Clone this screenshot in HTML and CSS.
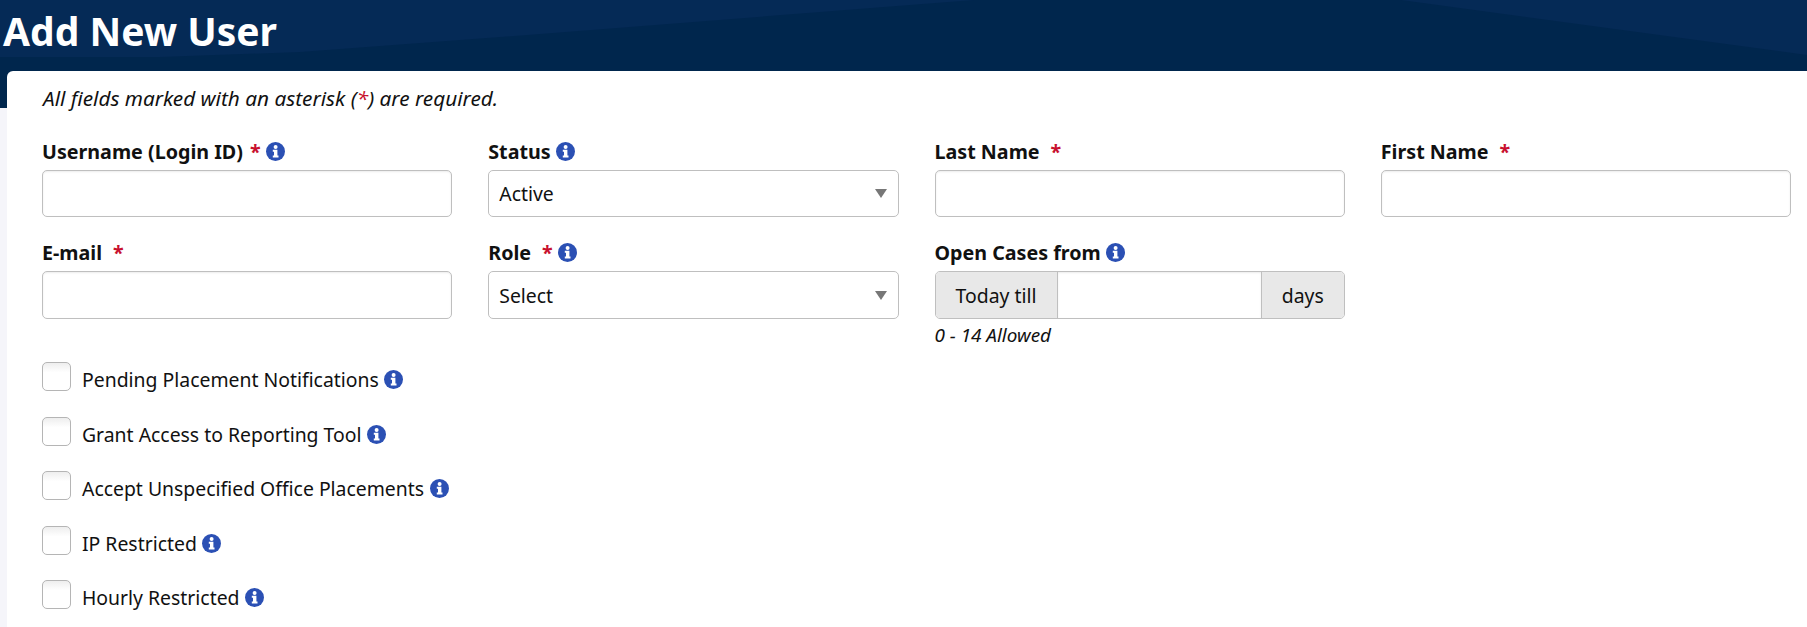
FILE: index.html
```html
<!DOCTYPE html>
<html lang="en">
<head>
<meta charset="utf-8">
<title>Add New User</title>
<link rel="stylesheet" href="styles.css">
</head>
<body>
<svg class="defs" width="0" height="0" aria-hidden="true">
  <symbol id="info" viewBox="0 0 19 19">
    <circle cx="9.5" cy="9.5" r="9.5" fill="#2b50b4"/>
    <circle cx="9.6" cy="5" r="2" fill="#fff"/>
    <path d="M6.8 7.8h4.6v5.7h1.1v2H6.8v-2H8V9.8H6.8z" fill="#fff"/>
  </symbol>
</svg>
<header class="banner">
  <svg class="banner-art" viewBox="0 0 1807 108" preserveAspectRatio="none" aria-hidden="true">
    <path d="M0 0H974L500 37L300 52L160 57H0z" fill="#052a56"/>
    <path d="M1401 0H1807V55z" fill="#052a56"/>
  </svg>
  <h1 class="title">Add New User</h1>
</header>
<main class="card">
  <p class="note">All fields marked with an asterisk (<span class="req-plain">*</span>) are required.</p>
  <div class="grid">
    <div class="field">
      <label class="label">Username (Login ID)<span class="req">*</span><svg class="info"><use href="#info"/></svg></label>
      <input class="control" type="text">
    </div>
    <div class="field">
      <label class="label">Status<svg class="info"><use href="#info"/></svg></label>
      <div class="control select">Active<span class="caret"></span></div>
    </div>
    <div class="field">
      <label class="label">Last Name<span class="req spaced">*</span></label>
      <input class="control" type="text">
    </div>
    <div class="field">
      <label class="label">First Name<span class="req spaced">*</span></label>
      <input class="control" type="text">
    </div>
    <div class="field">
      <label class="label">E-mail<span class="req spaced">*</span></label>
      <input class="control tall" type="text">
    </div>
    <div class="field">
      <label class="label">Role<span class="req spaced">*</span><svg class="info"><use href="#info"/></svg></label>
      <div class="control select tall">Select<span class="caret"></span></div>
    </div>
    <div class="field">
      <label class="label">Open Cases from<svg class="info"><use href="#info"/></svg></label>
      <div class="group">
        <span class="addon addon-left">Today till</span>
        <input class="group-input" type="text">
        <span class="addon addon-right">days</span>
      </div>
      <small class="hint">0 - 14 Allowed</small>
    </div>
  </div>
  <ul class="checks">
    <li class="check"><span class="box"></span>Pending Placement Notifications<svg class="info"><use href="#info"/></svg></li>
    <li class="check"><span class="box"></span>Grant Access to Reporting Tool<svg class="info"><use href="#info"/></svg></li>
    <li class="check"><span class="box"></span>Accept Unspecified Office Placements<svg class="info"><use href="#info"/></svg></li>
    <li class="check"><span class="box"></span>IP Restricted<svg class="info"><use href="#info"/></svg></li>
    <li class="check"><span class="box"></span>Hourly Restricted<svg class="info"><use href="#info"/></svg></li>
  </ul>
</main>
</body>
</html>
```
FILE: styles.css
```css
* { box-sizing: border-box; }
html, body { margin: 0; height: 627px; overflow: hidden; }
body {
  background: #f5f5fa;
  color: #111;
  font-family: "Noto Sans", "Open Sans", sans-serif;
  font-size: 19.4px;
  position: relative;
}
.defs { position: absolute; }
.banner {
  position: relative;
  height: 108px;
  background: #00264d;
  margin-bottom: -37px;
}
.banner-art { position: absolute; inset: 0; width: 100%; height: 100%; }
.title {
  position: relative;
  margin: 0;
  padding: 6px 0 0 3px;
  font-size: 39px;
  line-height: 49px;
  font-weight: 700;
  color: #fff;
}
.card {
  position: relative;
  margin-left: 7px;
  height: 556px;
  padding: 0 16px 0 35px;
  background: #fff;
  border-radius: 6px 0 0 0;
}
.note { margin: 0; padding: 15px 0 0 1px; line-height: 25px; font-size: 20.75px; font-style: italic; }
.req-plain { color: #c8102e; }
.grid {
  display: grid;
  grid-template-columns: repeat(4, minmax(0, 1fr));
  column-gap: 36px;
  margin-top: 29px;
}
.field { height: 101px; }
.label {
  display: flex;
  align-items: center;
  height: 23px;
  margin-bottom: 7px;
  font-size: 19.7px;
  font-weight: 700;
  white-space: pre;
}
.req { color: #c8102e; margin-left: 7px; }
.spaced { margin-left: 11px; }
.info { width: 19px; height: 19px; margin-left: 5.5px; flex: none; }
.control {
  display: block;
  width: 100%;
  height: 47px;
  border: 1px solid #bfbfbf;
  border-radius: 5px;
  background: #fff;
  font: inherit;
  color: inherit;
  box-shadow: inset 0 1px 2px rgba(0, 0, 0, 0.08);
}
.tall { height: 48px; }
.select {
  display: flex;
  align-items: center;
  justify-content: space-between;
  padding: 0 11px 0 10px;
  box-shadow: none;
}
.caret {
  width: 0;
  height: 0;
  border-left: 6px solid transparent;
  border-right: 6px solid transparent;
  border-top: 9px solid #777;
}
.group {
  display: flex;
  height: 48px;
  border: 1px solid #bfbfbf;
  border-radius: 5px;
  overflow: hidden;
}
.addon {
  display: flex;
  align-items: center;
  justify-content: center;
  background: #e8e8e8;
  flex: none;
}
.addon-left { width: 122px; border-right: 1px solid #bfbfbf; }
.addon-right { width: 83px; border-left: 1px solid #bfbfbf; }
.group-input { flex: 1; min-width: 0; border: 0; font: inherit; box-shadow: inset 0 1px 2px rgba(0, 0, 0, 0.08); }
.hint { display: block; margin-top: 5px; font-size: 18.9px; line-height: 22px; font-style: italic; }
.checks { list-style: none; margin: 10.5px 0 0; padding: 0; }
.check {
  display: flex;
  align-items: center;
  height: 54.5px;
  white-space: pre;
}
.box {
  width: 29px;
  height: 29px;
  margin: 0 11px 6px 0;
  border: 1px solid #b5b5b5;
  border-radius: 5px;
  background: linear-gradient(#eee, #fff 35%);
  flex: none;
}
```
